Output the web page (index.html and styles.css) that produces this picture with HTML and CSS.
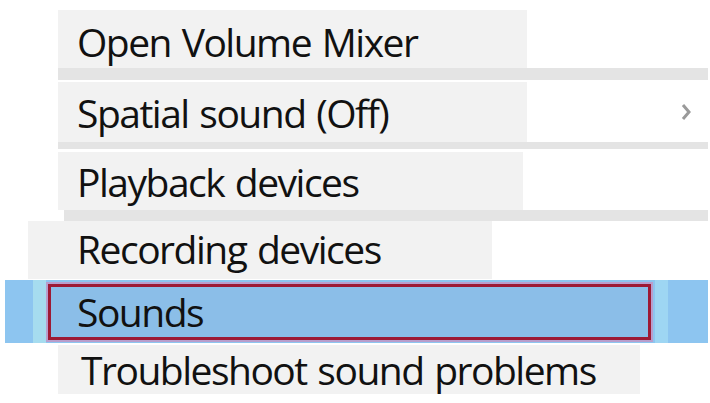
FILE: index.html
```html
<!DOCTYPE html>
<html lang="en">
<head>
<meta charset="utf-8">
<title>Sound menu</title>
<link rel="stylesheet" href="styles.css">
</head>
<body>
<div class="menu">
  <div class="row r1"><div class="item w1"><span class="label">Open Volume Mixer</span></div></div>
  <div class="band b1"></div>
  <div class="row r2">
    <div class="item w1"><span class="label">Spatial sound (Off)</span></div>
    <div class="rest">
      <svg class="chev" width="12" height="22" viewBox="0 0 12 22"><path d="M3 4 L9 11 L3 18" fill="none" stroke="#9a9a9a" stroke-width="3"/></svg>
    </div>
  </div>
  <div class="band b2"></div>
  <div class="row r3"><div class="item w3"><span class="label">Playback devices</span></div></div>
  <div class="band b3"></div>
  <div class="row r4"><div class="item w4"><span class="label">Recording devices</span></div></div>
  <div class="sounds">
    <div class="edge"></div>
    <div class="sel"><span class="label">Sounds</span></div>
    <div class="edge right"></div>
  </div>
  <div class="row r6"><div class="item w6"><span class="label">Troubleshoot sound problems</span></div></div>
</div>
</body>
</html>
```
FILE: styles.css
```css
html, body {
  margin: 0;
  padding: 0;
  background: #ffffff;
}
body {
  width: 710px;
  height: 403px;
  overflow: hidden;
  font-family: "Open Sans", "Noto Sans", "Liberation Sans", sans-serif;
  font-size: 39px;
  letter-spacing: -1.5px;
  word-spacing: 2px;
  color: #111111;
}
.menu {
  display: flex;
  flex-direction: column;
  padding-top: 10px;
}
.row {
  display: flex;
  margin-left: 58px;
  width: 650px;
}
.item {
  background: #f2f2f2;
  display: flex;
  align-items: center;
  padding-left: 19px;
  box-sizing: border-box;
}
.label {
  line-height: 1;
  white-space: nowrap;
}
.rest {
  flex: 1;
  display: flex;
  justify-content: flex-end;
  align-items: center;
  padding-right: 16px;
}
.r1 { height: 58px; }
.w1 { width: 469px; }
.r1 .label { padding-top: 4px; }
.band { background: #e4e4e4; margin-left: 58px; width: 650px; }
.b1 { height: 12px; border-bottom: 2px solid #fff; }
.r2 { height: 60px; }
.b2 { height: 7px; border-bottom: 3px solid #fff; }
.r3 { height: 58px; }
.w3 { width: 465px; }
.b3 { height: 11px; margin-left: 64px; width: 644px; }
.r4 { height: 58px; margin-left: 28px; width: 680px; }
.w4 { width: 464px; padding-left: 49px; }
.r4 .label { padding-bottom: 4px; }
.sounds {
  display: flex;
  align-items: center;
  margin-left: 5px;
  width: 703px;
  height: 63px;
  background: #8dc5f0;
  margin-top: 1px;
}
.edge {
  width: 13px;
  height: 63px;
  margin-left: 28px;
  margin-right: 2px;
  background: #a6dcef;
}
.edge.right {
  margin-left: 4px;
  margin-right: 0;
  background: #9ed6f3;
}
.sel {
  width: 603px;
  height: 56px;
  box-sizing: border-box;
  border: 3px solid #9d1a35;
  box-shadow: 0 0 0 2px rgba(240, 110, 160, 0.45);
  background: #8bbee8;
  display: flex;
  align-items: center;
  padding-left: 26px;
}
.r6 { height: 49px; margin-top: 2px; }
.w6 { width: 582px; padding-left: 23px; }
```
